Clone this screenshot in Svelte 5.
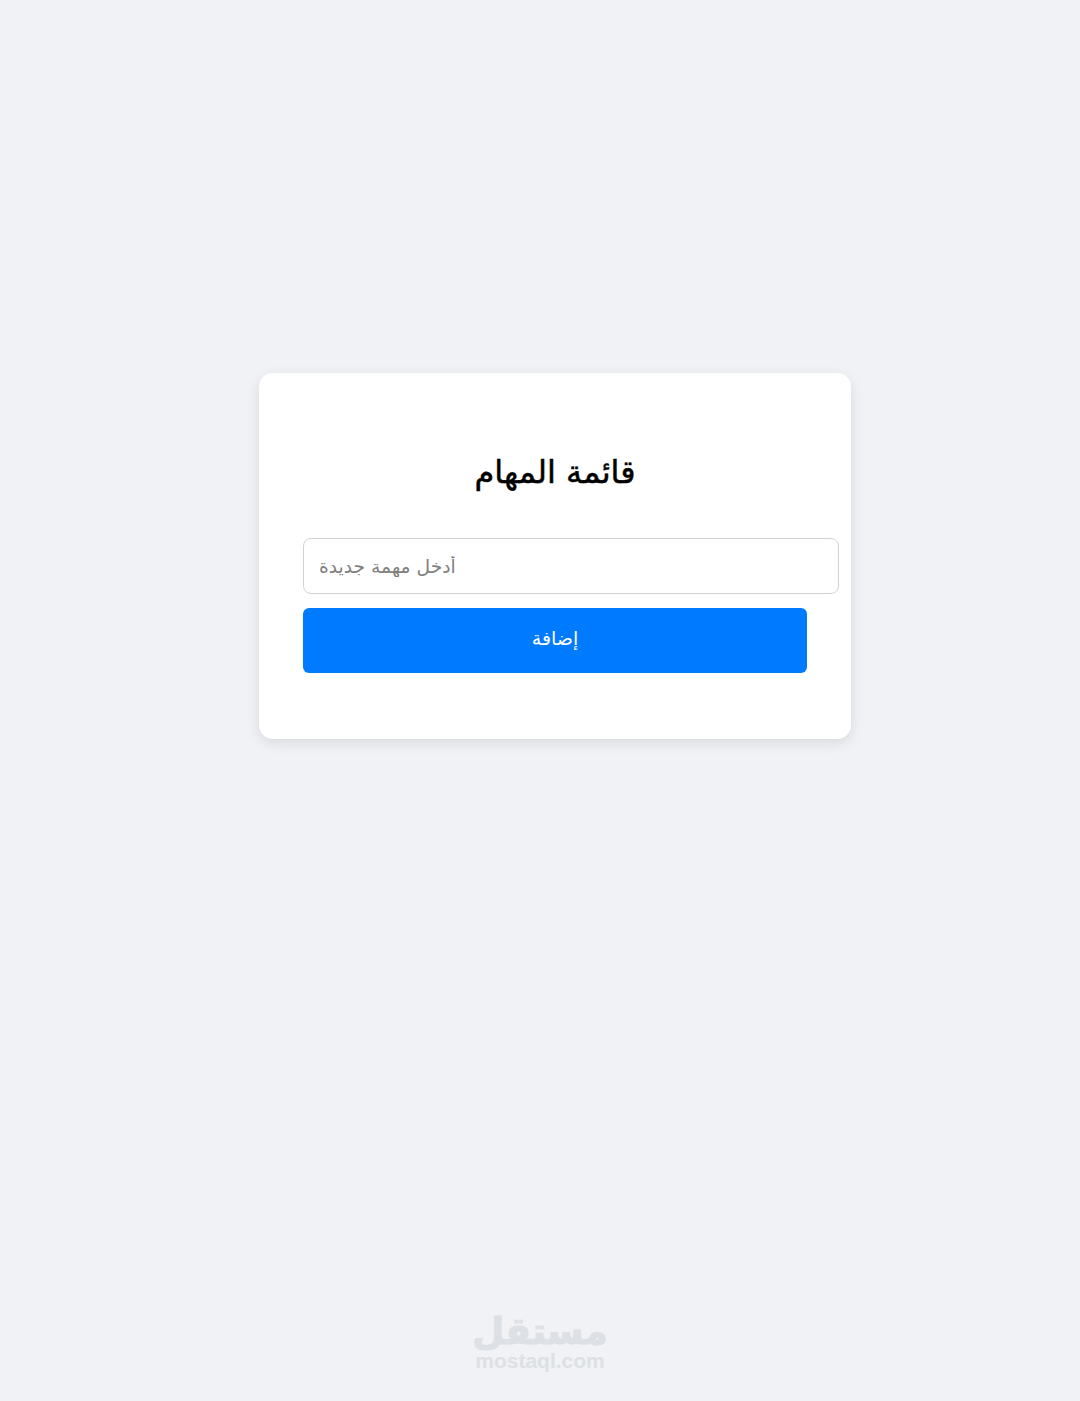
<script>
  let task = $state('');
</script>

<main class="page">
  <section class="card">
    <h1>قائمة المهام</h1>
    <input type="text" bind:value={task} placeholder="أدخل مهمة جديدة" />
    <button type="button">إضافة</button>
  </section>

  <footer class="mark">
    <span class="mark-ar">مستقل</span>
    <span class="mark-en">mostaql.com</span>
  </footer>
</main>

<style>
  :global(body) {
    margin: 0;
    background: #f0f2f5;
    font-family: "DejaVu Sans", sans-serif;
  }

  .page {
    height: 1401px;
    box-sizing: border-box;
    padding: 373px 0 0 259px;
    overflow: hidden;
  }

  .card {
    width: 592px;
    height: 366px;
    box-sizing: border-box;
    padding: 75px 44px 0;
    background: #fff;
    border-radius: 14px;
    box-shadow: 0 4px 14px rgba(0, 0, 0, 0.1);
  }

  h1 {
    margin: 0 0 41px;
    height: 49px;
    line-height: 49px;
    font-size: 32px;
    font-weight: 500;
    -webkit-text-stroke: 0.5px #000;
    text-align: center;
    color: #000;
  }

  input {
    display: block;
    width: 100%;
    box-sizing: content-box;
    height: 54px;
    padding: 0 15px;
    margin: 0 0 14px;
    border: 1px solid #d2d2d2;
    border-radius: 8px;
    background: #fff;
    font-family: inherit;
    font-size: 18.7px;
    outline: none;
  }

  input::placeholder {
    color: #808080;
  }

  button {
    display: block;
    width: 100%;
    height: 65px;
    padding: 0 0 6px;
    border: 0;
    border-radius: 6px;
    background: #007bff;
    color: #fff;
    font-family: inherit;
    font-size: 19px;
  }

  .mark {
    display: flex;
    flex-direction: column;
    align-items: center;
    width: 132px;
    margin: 567px 0 0 215px;
    color: #dde0e4;
    font-weight: 700;
  }

  .mark-ar {
    padding-top: 7px;
    font-size: 37px;
    line-height: 37px;
    -webkit-text-stroke: 1px #dde0e4;
  }

  .mark-en {
    font-family: "Liberation Sans", sans-serif;
    font-size: 21px;
    line-height: 22px;
  }
</style>
